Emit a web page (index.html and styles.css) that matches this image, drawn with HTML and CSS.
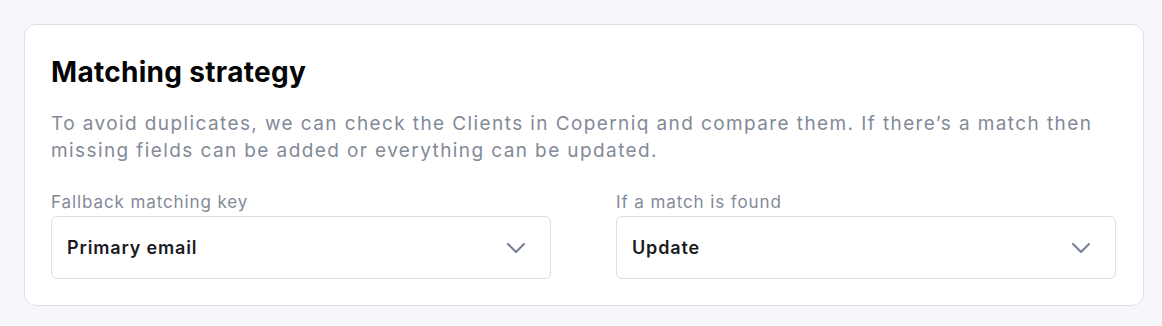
FILE: index.html
```html
<!DOCTYPE html>
<html lang="en">
<head>
<meta charset="utf-8">
<title>Matching strategy</title>
<link rel="stylesheet" href="styles.css">
</head>
<body>
<section class="card">
  <h2 class="card-title">Matching strategy</h2>
  <p class="card-desc">To avoid duplicates, we can check the Clients in Coperniq and compare them. If there’s a match then missing fields can be added or everything can be updated.</p>
  <div class="fields">
    <div class="field">
      <label class="field-label">Fallback matching key</label>
      <div class="select">
        <span class="select-value">Primary email</span>
        <svg class="chevron" width="20" height="20" viewBox="0 0 20 20" fill="none"><path d="M2 6l8 8 8-8" stroke="#747e92" stroke-width="2" stroke-linecap="round" stroke-linejoin="round"/></svg>
      </div>
    </div>
    <div class="field">
      <label class="field-label">If a match is found</label>
      <div class="select">
        <span class="select-value">Update</span>
        <svg class="chevron" width="20" height="20" viewBox="0 0 20 20" fill="none"><path d="M2 6l8 8 8-8" stroke="#747e92" stroke-width="2" stroke-linecap="round" stroke-linejoin="round"/></svg>
      </div>
    </div>
  </div>
</section>
</body>
</html>
```
FILE: styles.css
```css
* { box-sizing: border-box; }
html, body { margin: 0; }
body {
  background: #f7f7fb;
  padding: 24px 18px 20px 24px;
  font-family: Inter, "Noto Sans", sans-serif;
}
.card {
  background: #fff;
  border: 1px solid #e0dfe9;
  border-radius: 12px;
  padding: 30px 26px 26px 26px;
}
.card-title {
  margin: 0;
  font-size: 28px;
  line-height: 34px;
  font-weight: 700;
  color: #050505;
  letter-spacing: 0.3px;
}
.card-desc {
  margin: 21px 0 0;
  font-size: 19px;
  line-height: 27px;
  color: #838a98;
  letter-spacing: 1.4px;
}
.fields {
  display: grid;
  grid-template-columns: 500px 500px;
  column-gap: 65px;
  margin-top: 28px;
}
.field { display: flex; flex-direction: column; }
.field-label {
  font-size: 17px;
  line-height: 20px;
  color: #838a98;
  letter-spacing: 0.9px;
}
.select {
  margin-top: 4px;
  height: 63px;
  border: 1px solid #dfdee7;
  border-radius: 6px;
  display: flex;
  align-items: center;
  justify-content: space-between;
  padding: 0 24px 0 15px;
}
.select-value {
  font-size: 18px;
  line-height: 22px;
  font-weight: 600;
  color: #1b1b1f;
  letter-spacing: 0.85px;
}
.chevron { display: block; }
```
